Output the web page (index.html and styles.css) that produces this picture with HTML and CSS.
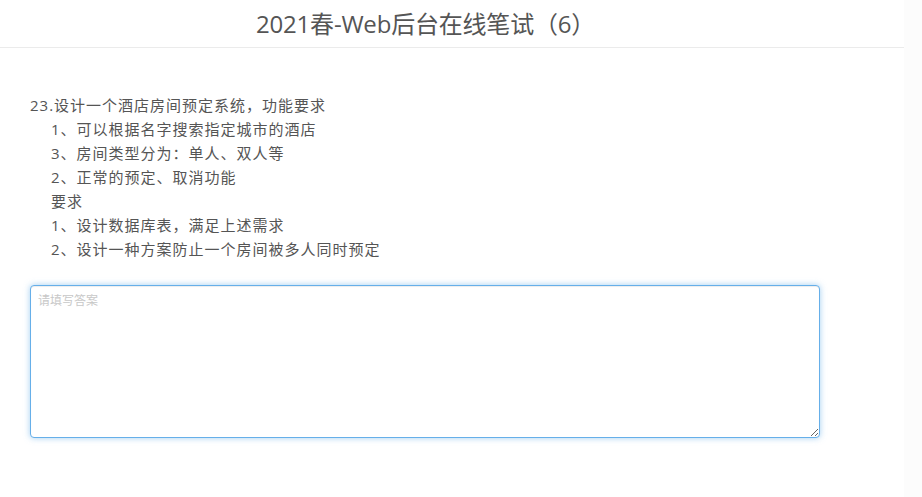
FILE: index.html
```html
<!DOCTYPE html>
<html lang="zh-CN">
<head>
<meta charset="utf-8">
<title>2021春-Web后台在线笔试（6）</title>
<link rel="stylesheet" href="styles.css">
</head>
<body>
<div class="page">
  <header class="header">
    <h1 class="title">2021春-Web后台在线笔试（6）</h1>
  </header>
  <main class="content">
    <div class="question">
      <div class="q-line">23.设计一个酒店房间预定系统，功能要求</div>
      <div class="q-line indent">1、可以根据名字搜索指定城市的酒店</div>
      <div class="q-line indent">3、房间类型分为：单人、双人等</div>
      <div class="q-line indent">2、正常的预定、取消功能</div>
      <div class="q-line indent">要求</div>
      <div class="q-line indent">1、设计数据库表，满足上述需求</div>
      <div class="q-line indent">2、设计一种方案防止一个房间被多人同时预定</div>
    </div>
    <textarea class="answer" placeholder="请填写答案"></textarea>
  </main>
</div>
</body>
</html>
```

FILE: styles.css
```css
html {
  background: #fcfcfc;
}
body {
  margin: 0;
  font-family: "Open Sans", "Noto Sans CJK SC", sans-serif;
  color: #555;
}
.page {
  width: 904px;
  min-height: 497px;
  background: #fff;
}
.header {
  height: 48px;
  border-bottom: 1px solid #ebebeb;
  display: flex;
  align-items: center;
  box-sizing: border-box;
  padding-left: 256px;
}
.title {
  margin: 0;
  font-size: 24px;
  font-weight: normal;
  color: #555;
  line-height: 32px;
  letter-spacing: -0.2px;
}
.content {
  padding: 45px 30px 0 30px;
}
.question {
  font-size: 15px;
  letter-spacing: 1px;
  line-height: 24px;
  color: #555;
}
.q-line.indent {
  padding-left: 21px;
}
.answer {
  display: block;
  margin-top: 24px;
  width: 790px;
  height: 153px;
  box-sizing: border-box;
  border: 1px solid #66afe9;
  border-radius: 4px;
  box-shadow: inset 0 1px 1px rgba(0,0,0,.075), 0 0 6px rgba(102,175,233,.6);
  padding: 5px 7px;
  font-family: "Open Sans", "Noto Sans CJK SC", sans-serif;
  font-size: 12px;
  color: #555;
  outline: none;
  background: #fff;
}
.answer::placeholder {
  color: #c8c8c8;
}
```
